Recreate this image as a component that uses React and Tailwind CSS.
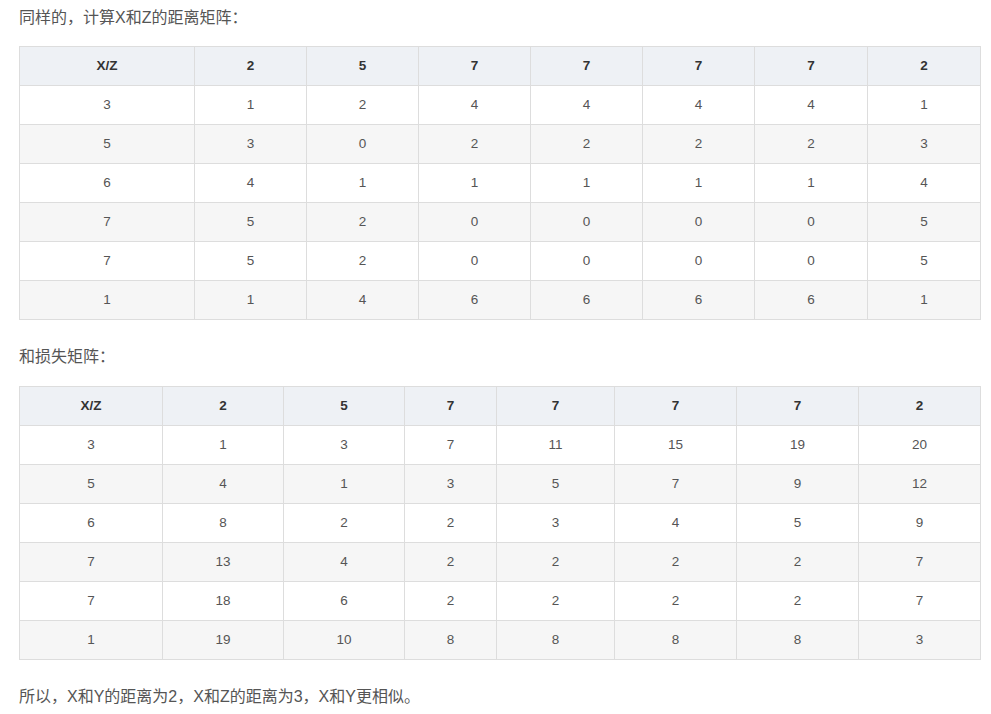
import React from "react";

const t1 = {
  head: ["X/Z", "2", "5", "7", "7", "7", "7", "2"],
  rows: [
    ["3", "1", "2", "4", "4", "4", "4", "1"],
    ["5", "3", "0", "2", "2", "2", "2", "3"],
    ["6", "4", "1", "1", "1", "1", "1", "4"],
    ["7", "5", "2", "0", "0", "0", "0", "5"],
    ["7", "5", "2", "0", "0", "0", "0", "5"],
    ["1", "1", "4", "6", "6", "6", "6", "1"],
  ],
  widths: [175, 112, 112, 112, 112, 112, 113, 113],
};

const t2 = {
  head: ["X/Z", "2", "5", "7", "7", "7", "7", "2"],
  rows: [
    ["3", "1", "3", "7", "11", "15", "19", "20"],
    ["5", "4", "1", "3", "5", "7", "9", "12"],
    ["6", "8", "2", "2", "3", "4", "5", "9"],
    ["7", "13", "4", "2", "2", "2", "2", "7"],
    ["7", "18", "6", "2", "2", "2", "2", "7"],
    ["1", "19", "10", "8", "8", "8", "8", "3"],
  ],
  widths: [143, 121, 121, 92, 118, 122, 122, 122],
};

function Table({ data }) {
  return (
    <table className="border-collapse table-fixed w-[961px] text-[13.5px] font-['Liberation_Sans',Arial,sans-serif]">
      <colgroup>
        {data.widths.map((w, i) => (
          <col key={i} style={{ width: w }} />
        ))}
      </colgroup>
      <thead>
        <tr className="bg-[#eef1f5] h-[39px]">
          {data.head.map((h, i) => (
            <th key={i} className="border border-[#dddddd] text-center font-bold text-[#333333] p-0">
              {h}
            </th>
          ))}
        </tr>
      </thead>
      <tbody>
        {data.rows.map((r, ri) => (
          <tr key={ri} className={"h-[39px] " + (ri % 2 === 1 ? "bg-[#f6f6f6]" : "bg-white")}>
            {r.map((c, ci) => (
              <td key={ci} className="border border-[#dddddd] text-center text-[#555555] p-0">
                {c}
              </td>
            ))}
          </tr>
        ))}
      </tbody>
    </table>
  );
}

export default function App() {
  return (
    <div className="bg-white w-[991px] h-[714px] pl-[19px] text-[#555555] font-['Liberation_Sans','Noto_Sans_CJK_SC',sans-serif]">
      <p className="pt-[6px] text-[16px] leading-[24px]">同样的，计算X和Z的距离矩阵：</p>
      <div className="mt-[16px]">
        <Table data={t1} />
      </div>
      <p className="mt-[25px] text-[16px] leading-[24px]">和损失矩阵：</p>
      <div className="mt-[17px]">
        <Table data={t2} />
      </div>
      <p className="mt-[25px] text-[16px] leading-[24px]">所以，X和Y的距离为2，X和Z的距离为3，X和Y更相似。</p>
    </div>
  );
}
